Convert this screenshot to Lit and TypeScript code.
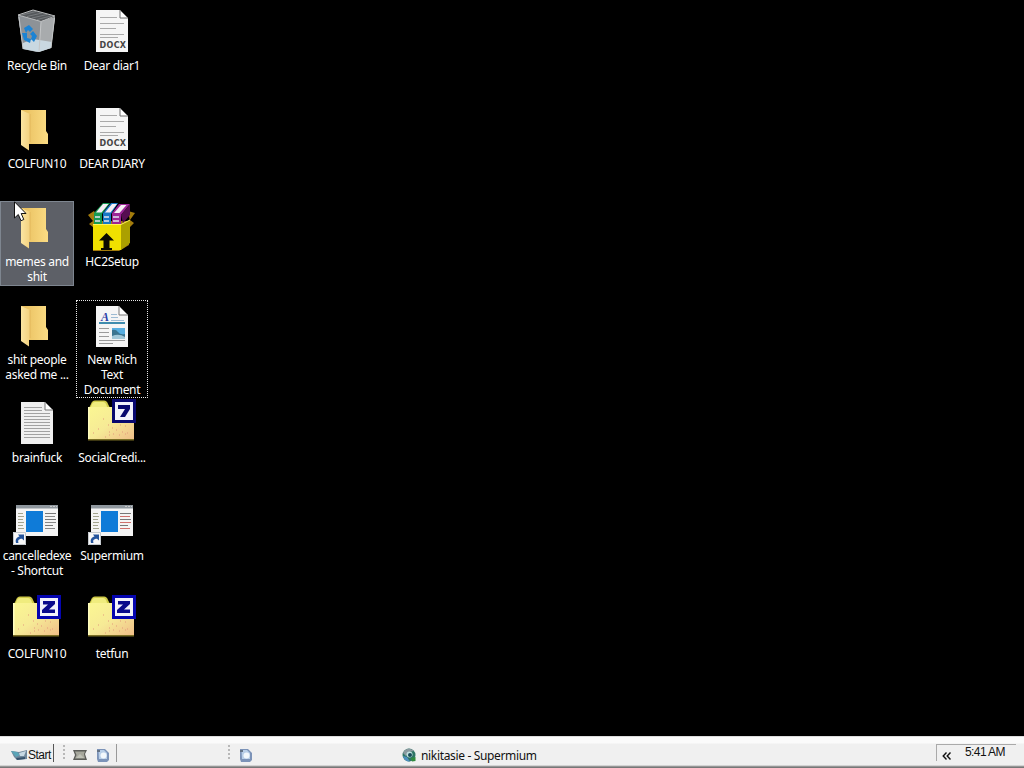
import {html, css, svg, LitElement, SVGTemplateResult} from 'lit';
import {customElement, property} from 'lit/decorators.js';
import {classMap} from 'lit/directives/class-map.js';

interface DesktopItem {
  icon: string;
  lines: string[];
  state?: 'selected' | 'focused';
}

// Column by column, the way the shell arranges them
const ITEMS: DesktopItem[] = [
  { icon: 'bin', lines: ['Recycle Bin'] },
  { icon: 'folder', lines: ['COLFUN10'] },
  { icon: 'folder', lines: ['memes and', 'shit'], state: 'selected' },
  { icon: 'folder', lines: ['shit people', 'asked me ...'] },
  { icon: 'text', lines: ['brainfuck'] },
  { icon: 'shortcut', lines: ['cancelledexe', '- Shortcut'] },
  { icon: 'zip', lines: ['COLFUN10'] },
  { icon: 'docx', lines: ['Dear diar1'] },
  { icon: 'docx', lines: ['DEAR DIARY'] },
  { icon: 'setup', lines: ['HC2Setup'] },
  { icon: 'rtf', lines: ['New Rich', 'Text', 'Document'], state: 'focused' },
  { icon: 'seven', lines: ['SocialCredi...'] },
  { icon: 'shortcutRed', lines: ['Supermium'] },
  { icon: 'zip', lines: ['tetfun'] },
];

const archive = (border: string, mark: SVGTemplateResult) => svg`
  <path d="M0 9 Q2 8 3 5 Q4 1.500 7 1.500 H16 Q19 1.500 20 5 L22 9Z" fill="#cfca48"/>
  <path d="M3 8 Q4 3 7 3 H15 Q18 3 19 8Z" fill="#f0ec7e"/>
  <path d="M0 8 H46 V41 H0Z" fill="url(#paper)"/>
  <path d="M0 8 H1.500 V41 H0Z" fill="#fffdc0"/>
  <path d="M0 40 H46 V41.500 H0Z" fill="#7a6e24"/>
  <path d="M17 38h1m3-5h1m3 2h1m2-4h1m2 5h1m2-3h1m2-6h1m1 7h1m-8-8h1m-9 3h1m12 6h1m-17 1h1m-12-6h1m-6 4h1m20-12h1m10-1h1m-18 5h1m-6-6h1" stroke="#e39a7c"/>
  <path d="M24 0 H48 V24 H24Z" fill=${border}/>
  <path d="M27 3 H45 V21 H27Z" fill="#f2f2fb"/>
  ${mark}`;

const shortcut = (accent: string) => svg`
  <path d="M3 8 H45 V39 H3Z" fill="#f4f4f4"/>
  <path d="M3 8 H45 V11.500 H3Z" fill="#8f979e"/>
  <path d="M37 9.500h2m1 0h2m1 0h1" stroke="#c8c8c8"/>
  <path d="M13 14 H30 V35 H13Z" fill="#0f7bd8"/>
  <path d="M5 16.500h5m-5 3h6m-6 3h5m-5 3h6m-6 3h5m-5 3h6" stroke="#a3a48e"/>
  <path d="M32 16.500h11m-11 6h11m-11 6h8" stroke="#777"/>
  <path d="M32 19.500h10m-10 6h11m-11 6h10" stroke=${accent}/>
  <path d="M0 35 H13 V48 H0Z" fill="#f8f8f8"/>
  <path d="M.5 35.500 H12.500 V47.500 H.5Z" fill="none" stroke="#c4c9ce"/>
  <path d="M3 46 C2 42 4 40 6.500 39.500 L5 37.500 H11 V43.500 L9 41.800 C6 42 4.500 43 5.500 46Z" fill="#24549c"/>`;

const docx = svg`
  <path d="M8 3 H32 L40 11 V45 H8Z" fill="#f5f5f5"/>
  <path d="M32 3 V11 H40Z" fill="#fff" stroke="#6e6e6e"/>
  <path d="M12 10.500h17m-17 6h24m-24 5h16m-16 6h24m-24 3h18" stroke="#aaa"/>
  <text x="11.500" y="41" class="ext">DOCX</text>`;

const ICONS: Record<string, SVGTemplateResult> = {
  bin: svg`
    <path d="M5 8 L10 42 L24 45 L38 41 L42 10 L28 14Z" fill="#a9adb1"/>
    <path d="M5 8 L28 14 L26 45 L10 41.500Z" fill="#8d9297"/>
    <path d="M28 14 L42 10 L38 41 L26 45Z" fill="#a8abad"/>
    <path d="M10 36 L20 32 L39 35 L38 41 L26 45 L10 42Z" fill="#c9d8e1"/>
    <path d="M5 8 L20 3 L42 9 L28 14Z" fill="#55585b"/>
    <path d="M9 8 L23 4.500 M14 9.500 L29 6 M19 11 L34 7.500 M24 12.500 L38 9" stroke="#777b7e"/>
    <path d="M5 8 L20 3 L42 9 L28 14.500Z" fill="none" stroke="#b9bbbc"/>
    <path d="M28 15 L26 45 M6 10 L10 42 M41.500 11 L38 41" stroke="#c4c6c7" fill="none"/>
    <path d="M11 21 L16 18 L20 22 L17 25 L15 23 L13 26Z M9 26 L14 26 L14 31 L18 32 L17 36 L11 33Z M20 24 L24 29 L21 35 L18 32 L19 29 L17 27Z" fill="#1c83d4"/>`,
  folder: svg`
    <path d="M8 5 H33 V26 L35 29 V39 H12Z" fill="url(#manila)"/>
    <path d="M8 5 L17 9 V37 L16 38 V45.500 L8 40Z" fill="url(#flap)"/>
    <path d="M17 9 V37" stroke="#d9ac52" stroke-width=".6"/>`,
  text: svg`
    <path d="M8 3 H32 L40 11 V45 H8Z" fill="#f0f0f0"/>
    <path d="M32 3 V11 H40Z" fill="#fff" stroke="#777"/>
    <path d="M11 8.500h18m-18 3h18m-18 3h26m-26 3h26m-26 3h26m-26 3h26m-26 3h26m-26 3h26m-26 3h26m-26 3h26m-26 3h26" stroke="#a2a2a2"/>`,
  docx,
  rtf: svg`
    <path d="M8 5 H31 L40 14 V46 H8Z" fill="#f5f5f5"/>
    <path d="M31 5 V14 H40Z" fill="#fff" stroke="#777"/>
    <text x="13" y="20" class="letter">A</text>
    <path d="M23 13.500h6m-6 3h7m-7 3h13" stroke="#9dbbd3"/>
    <path d="M11 21 H37 V23 H11Z" fill="#3f8cae"/>
    <path d="M11 27.500h10m-10 4h10m-10 4h10m-10 4h26m-26 3h14" stroke="#9a9a9a"/>
    <path d="M24 27 H37 V38 H24Z" fill="#58aee0"/>
    <path d="M24 29 Q28 28 30 31 T37 33 V38 H24Z" fill="#3c7590"/>
    <path d="M24 35 Q31 32 37 36 V38 H24Z" fill="#a3c8d8"/>`,
  setup: svg`
    <path d="M0 12 L6 8 L12 18 H42 L40 8 L47 10 L42 17 L46 20 L41 25 V42 L31 48 H5 V24 L1 21 L5 18Z" fill="#a37c0c"/>
    <path d="M5 22 H33 V47 H5Z" fill="#f0e000"/>
    <path d="M33 22 L42 17 V40 L33 47Z" fill="#aba000"/>
    <path d="M6 10 L15 0 H22 L14 11 V21 H6Z" fill="#169a52"/>
    <path d="M15 10 L23 0 H30 L23 11 V21 H15Z" fill="#1778c6"/>
    <path d="M24 10 L31 1 H42 L33 12 V21 H24Z" fill="#9b2597"/>
    <path d="M33 12 L42 1 V12 L35 20Z" fill="#560d51"/>
    <path d="M8 9.500 L15 1 H20.500 L13.500 9.500Z M17 9.500 L24 1 H29 L22.500 9.500Z M26 10 L33 2 H38.500 L31.500 10Z" fill="#f7eef5"/>
    <path d="M7 14h5m4 0h5m4 0h6m-24 4h5m4 0h5m4 0h6" stroke="#e4e4f0" stroke-width="1.500"/>
    <path d="M5 21.500 H33 L42 17" stroke="#fff45c" fill="none"/>
    <path d="M18.500 30 L26 37.500 H21.500 V45 H24 V47 H13 V45 H15.500 V37.500 H11Z" fill="#0b0b00"/>`,
  seven: archive('#08086e', svg`<path d="M30 6 H42 V10 L37 18 H32 L37 10 H30Z" fill="#08086e"/>`),
  zip: archive('#0505b0', svg`<path d="M30 6 H42 V9 L36 14.500 H42 V18 H29 V15 L35 9.500 H30Z" fill="#0a0a8c"/>`),
  shortcut: shortcut('#888'),
  shortcutRed: shortcut('#d0706c'),
};

@customElement('desktop-icon')
export class DesktopIcon extends LitElement {
  @property({ attribute: false })
  item!: DesktopItem;

  static styles = css`
    :host {
      display: block;
      padding-top: 5px;
    }

    .item {
      box-sizing: border-box;
      width: 74px;
      min-height: 85px;
      padding-top: 2px;
      text-align: center;
    }

    .item--selected {
      background-color: #5d6067;
      box-shadow: inset 0 0 0 1px #7e8690;
    }

    .item--focused {
      width: 72px;
      height: 98px;
      margin: 1px 0 0 1px;
      padding-top: 0;
      border: 1px dotted #e8e8e8;
    }

    svg {
      display: block;
      width: 48px;
      height: 48px;
      margin: 0 auto 3px 13px;
    }

    .item--focused svg {
      margin-left: 11px;
    }

    .label {
      display: block;
      height: 15px;
      line-height: 15px;
      white-space: nowrap;
    }

    .ext {
      font: bold 8px "DejaVu Sans", sans-serif;
      letter-spacing: 0.35px;
      fill: #444;
    }

    .letter {
      font: italic bold 12px "Liberation Serif", serif;
      fill: #2b3fa8;
    }
  `;

  render() {
    const { icon, lines, state } = this.item;
    const classes = {
      "item": true,
      "item--selected": state === 'selected',
      "item--focused": state === 'focused',
    };
    return html`
      <div class=${classMap(classes)}>
        <svg viewBox="0 0 48 48">
          <defs>
            <linearGradient id="manila">
              <stop offset="0" stop-color="#e7bd5c"/>
              <stop offset="1" stop-color="#fbdc84"/>
            </linearGradient>
            <linearGradient id="flap">
              <stop offset="0" stop-color="#fbe5a2"/>
              <stop offset="1" stop-color="#f3d17e"/>
            </linearGradient>
            <linearGradient id="paper" x2="1" y2="1">
              <stop offset="0" stop-color="#fbf792"/>
              <stop offset="0.5" stop-color="#f6ea96"/>
              <stop offset="1" stop-color="#f0bd88"/>
            </linearGradient>
          </defs>
          ${ICONS[icon]}
        </svg>
        ${lines.map((line) => html`<span class="label">${line}</span>`)}
      </div>
    `;
  }
}

@customElement('task-bar')
export class TaskBar extends LitElement {
  static styles = css`
    :host {
      box-sizing: border-box;
      display: flex;
      align-items: flex-start;
      height: 32px;
      padding-top: 8px;
      color: #111;
      background: linear-gradient(#dcdcdc 0 1px, #fbfbfb 1px 7px, #f0f0f0 8px 29px, #b5b5b5 30px, #777 31px);
    }

    svg {
      display: block;
      flex: none;
    }

    .start {
      display: flex;
      align-items: center;
      box-sizing: border-box;
      width: 46px;
      height: 18px;
      margin-left: 8px;
      padding: 4px 0 0 3px;
      border-right: 1px solid #555;
      font: 12px/14px "Liberation Sans", sans-serif;
      letter-spacing: -0.5px;
    }

    .grip {
      width: 2px;
      height: 15px;
      margin: 1px 0 0 9px;
      background: repeating-linear-gradient(#b8b8b8 0 2px, transparent 2px 4px);
    }

    .quick {
      display: flex;
      gap: 9px;
      box-sizing: border-box;
      width: 52px;
      height: 18px;
      padding: 4px 0 0 8px;
      margin-right: 102px;
      border-right: 1px solid #999;
    }

    .tasks {
      display: flex;
      flex: 1;
      padding: 4px 0 0 9px;
    }

    .task {
      display: flex;
      gap: 5px;
      margin-left: 149px;
      line-height: 15px;
      letter-spacing: -0.34px;
    }

    .tray {
      display: flex;
      box-sizing: border-box;
      width: 80px;
      height: 17px;
      margin-right: 8px;
      border: solid #aaa;
      border-width: 1px 0 0 1px;
      font: 12px/15px "Liberation Sans", sans-serif;
    }

    .chevron {
      margin: 7px 13px 0 5px;
    }

    .clock {
      letter-spacing: -0.6px;
      white-space: nowrap;
    }
  `;

  renderPage() {
    return svg`
      <path d="M1 1 H9 L13 5 V12 L11 14 H2 L1 11Z" fill="#7c93b8"/>
      <path d="M2.500 2 H8 L11 5 V11 H3Z" fill="#b9cfe8"/>
      <circle cx="7.500" cy="7.500" r="3" fill="#f3f8fc"/>
      <path d="M1 2 H4 V4 H1Z" fill="#647386"/>
    `;
  }

  render() {
    return html`
      <div class="start">
        <svg width="17" height="12" viewBox="0 0 17 12">
          <path d="M0 2 L8 3 L16 1 V10 L6 11 L3 8Z" fill="#70889c"/>
          <path d="M0 2 L6 3 L9 6 L5 8Z" fill="#5aa5b8"/>
          <path d="M8 4 L15 2 L13 7 L9 7Z" fill="#c7d9e4"/>
          <path d="M5 9 L14 8 L14 10 L6 11Z" fill="#36536d"/>
        </svg>
        <span>Start</span>
      </div>
      <div class="grip"></div>
      <div class="quick">
        <svg width="14" height="14" viewBox="0 0 14 14">
          <path d="M0 2 H14 L12 6 L14 12 H0 L2 7Z" fill="#5b5c58"/>
          <path d="M2 3.500 H12 L11 6 L12 10.500 H2 L3.500 7Z" fill="#a6a79c"/>
          <path d="M3 10 L7 6 L11 10Z" fill="#bfc1b6"/>
        </svg>
        <svg width="14" height="15" viewBox="0 0 14 15">${this.renderPage()}</svg>
      </div>
      <div class="grip"></div>
      <div class="tasks">
        <svg width="14" height="15" viewBox="0 0 14 15">${this.renderPage()}</svg>
        <div class="task">
          <svg width="14" height="14" viewBox="0 0 14 14">
            <circle cx="7" cy="7" r="6.500" fill="#2e7566"/>
            <path d="M1 5 A6.500 6.500 0 0 1 12 3 L7 4 L4 8Z" fill="#8b9aa0"/>
            <path d="M1 8 L5 9 L8 13.500 A6.500 6.500 0 0 1 1 8Z" fill="#4d8fc0"/>
            <path d="M9 10 L13.500 9 V13 L10 13.500Z" fill="#318b3d"/>
            <circle cx="7.500" cy="6.500" r="3" fill="#bfe0df"/>
            <circle cx="8" cy="7" r="2" fill="#184b59"/>
          </svg>
          <span>nikitasie - Supermium</span>
        </div>
      </div>
      <div class="tray">
        <svg class="chevron" width="10" height="8" viewBox="0 0 10 8">
          <path d="M4.500 .5 L1.200 4 L4.500 7.500 M8.500 .5 L5.200 4 L8.500 7.500" fill="none" stroke="#111" stroke-width="1.400"/>
        </svg>
        <span class="clock">5:41 AM</span>
      </div>
    `;
  }
}

@customElement('app-root')
export class AppRoot extends LitElement {
  static styles = css`
    :host {
      position: relative;
      display: flex;
      flex-direction: column;
      width: 1024px;
      height: 768px;
      overflow: hidden;
      background-color: #000;
      color: #fff;
      font: 12px/15px "Noto Sans", "Open Sans", sans-serif;
      letter-spacing: -0.3px;
    }

    .desktop {
      display: grid;
      flex: 1;
      grid-template-rows: repeat(7, 98px);
      grid-auto-flow: column;
      grid-auto-columns: 75px;
      min-height: 0;
    }

    .cursor {
      position: absolute;
      top: 201px;
      left: 14px;
    }
  `;

  render() {
    return html`
      <div class="desktop">
        ${ITEMS.map((item) => html`<desktop-icon .item=${item}></desktop-icon>`)}
      </div>
      <task-bar></task-bar>
      <svg class="cursor" width="13" height="21" viewBox="0 0 13 21">
        <path d="M.5 .8 V17 L4.300 13.500 L7 19.700 L9.800 18.500 L7.200 12.500 H12Z" fill="#fff" stroke="#111"/>
      </svg>
    `;
  }
}

declare global {
  interface HTMLElementTagNameMap {
    'desktop-icon': DesktopIcon;
    'task-bar': TaskBar;
    'app-root': AppRoot;
  }
}
